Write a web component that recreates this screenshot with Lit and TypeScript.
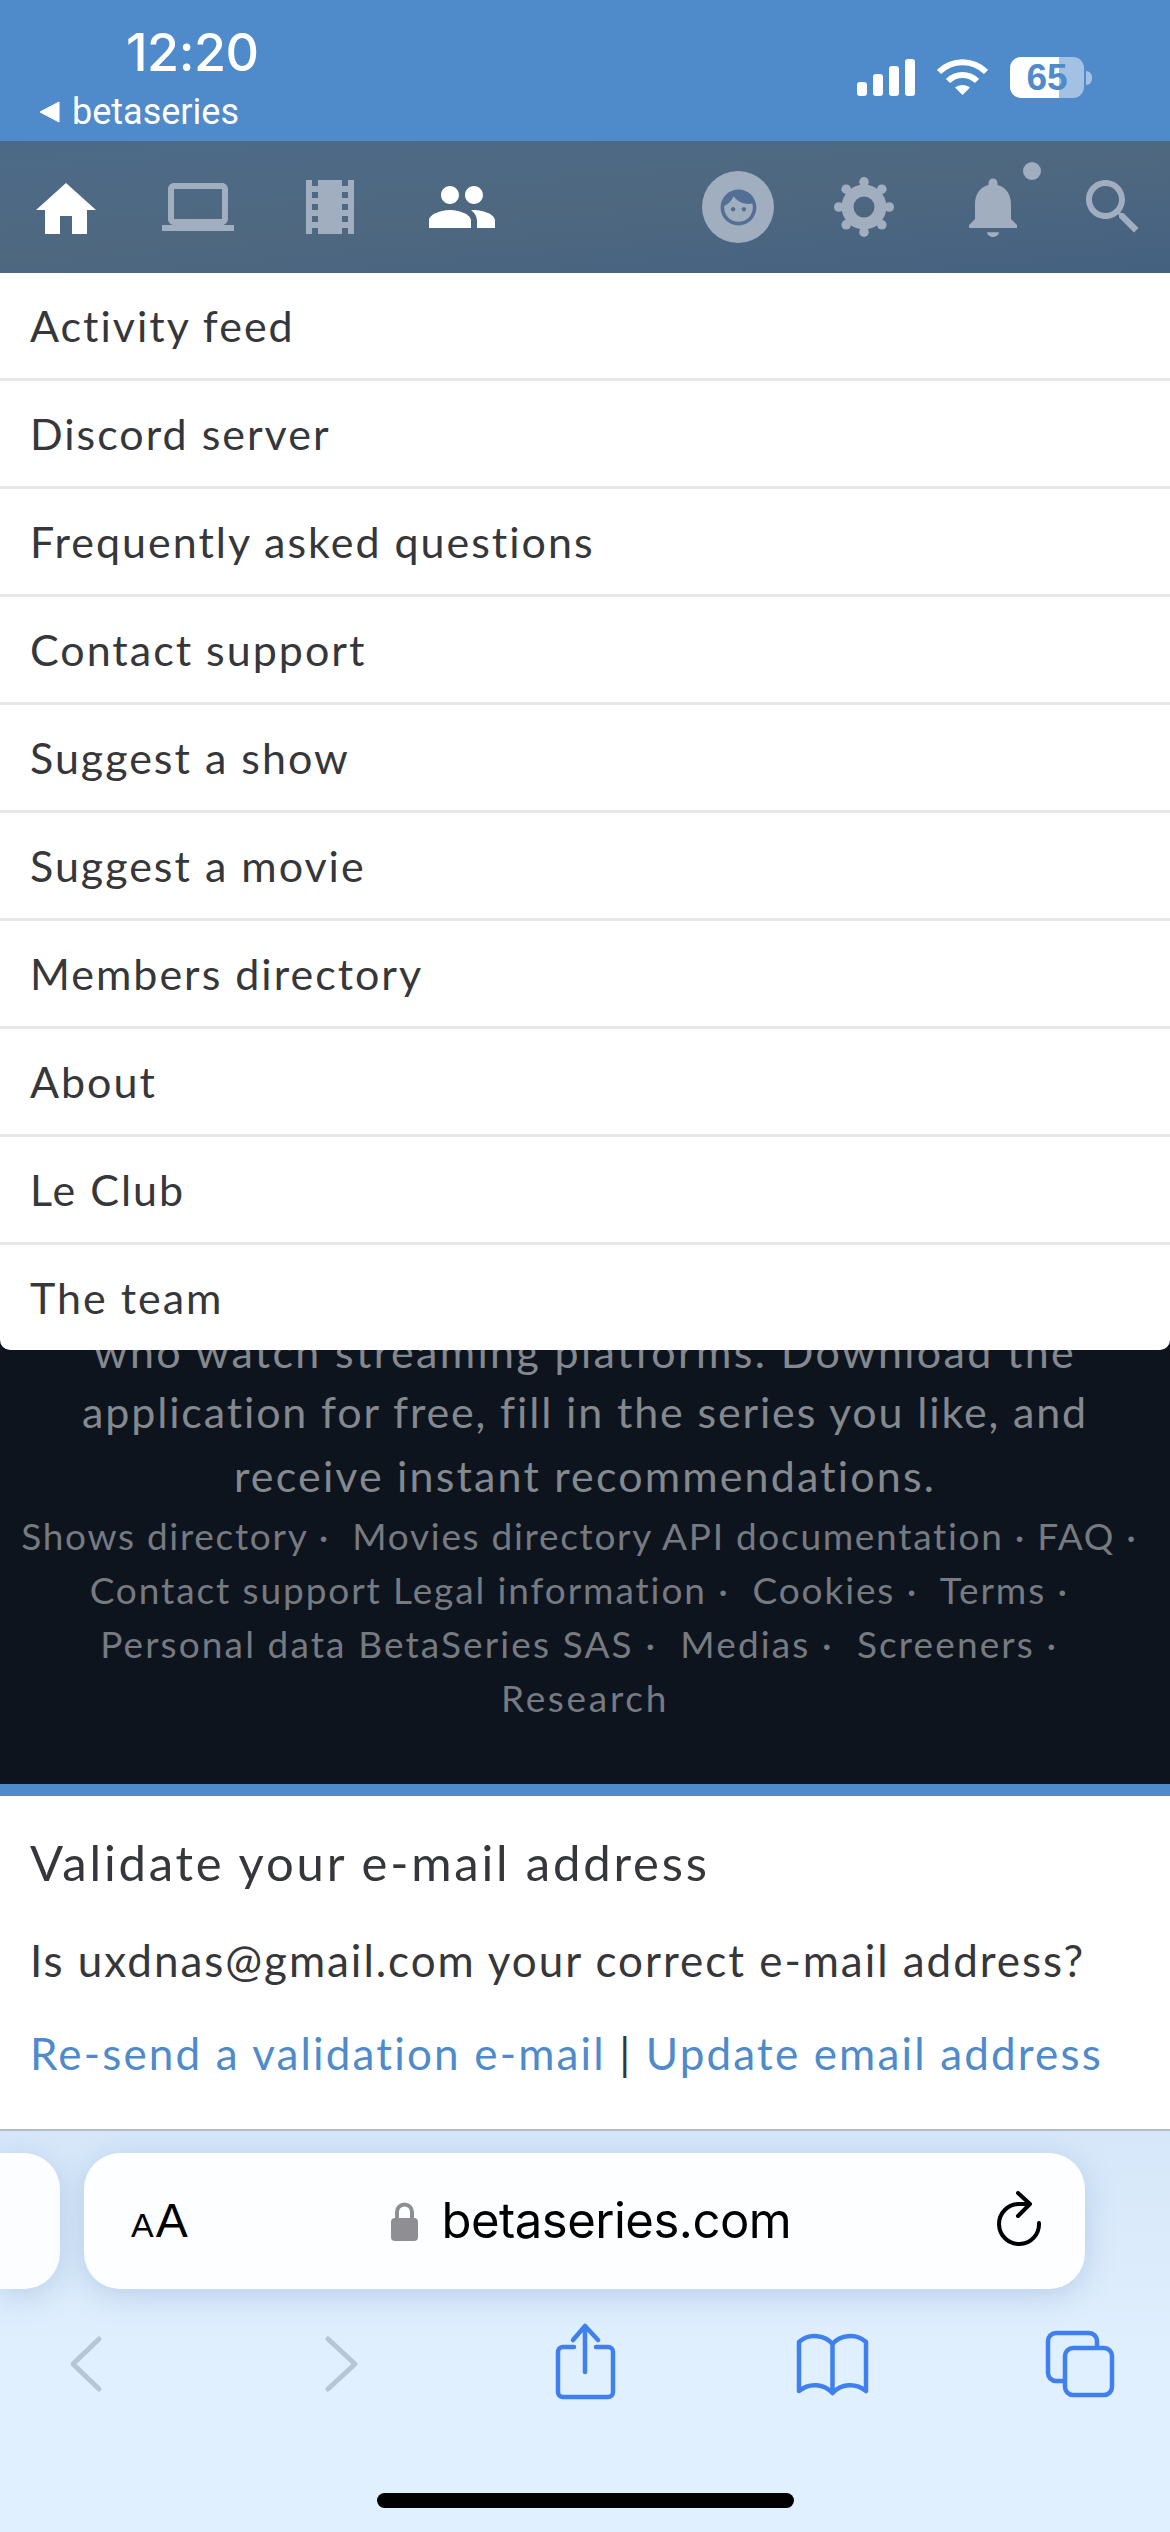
import { LitElement, html, css } from "lit";
import { customElement } from "lit/decorators.js";

const MENU = ["Activity feed","Discord server","Frequently asked questions","Contact support","Suggest a show","Suggest a movie","Members directory","About","Le Club","The team"];
const FOOT = [
  "Shows directory ·  Movies directory API documentation · FAQ · ",
  "Contact support Legal information ·  Cookies ·  Terms · ",
  "Personal data BetaSeries SAS ·  Medias ·  Screeners · ",
  "Research",
];

@customElement("app-root")
export class AppRoot extends LitElement {
  static styles = css`
    :host { display: block; width: 1170px; height: 2532px; overflow: hidden; font-family: "Lato", "Noto Sans", sans-serif; background: #fff; }
    .page { display: flex; flex-direction: column; height: 2532px; }
    .status { height: 141px; background: #4f8aca; color: #fff; display: flex; justify-content: space-between; flex: none; font-family: "Inter", sans-serif; }
    .status-left { display: flex; flex-direction: column; padding: 28px 0 0 39px; }
    .time { font-size: 52px; line-height: 50px; font-weight: 500; margin-left: 87px; letter-spacing: -0.5px; }
    .back { display: flex; align-items: center; gap: 12px; margin-top: 14px; font-size: 36px; line-height: 40px; font-family: "Roboto", sans-serif; }
    .status-right { display: flex; align-items: flex-start; padding: 57px 78px 0 0; gap: 22px; }
    .battery { display: flex; align-items: center; gap: 2px; }
    .cell { width: 74px; height: 41px; border-radius: 11px; background: linear-gradient(90deg, #fff 0 49px, rgba(255,255,255,.48) 49px); color: #4f8aca; font: bold 37px/41px "Liberation Sans", sans-serif; text-align: center; }
    .nub { width: 6px; height: 14px; border-radius: 0 6px 6px 0; background: rgba(255,255,255,.48); }
    .nav { height: 132px; flex: none; display: flex; justify-content: space-between; align-items: center; padding: 0 21px 0 30px; background: linear-gradient(175deg, #4c6a88 0%, #4f6880 50%, #446181 100%); }
    .nav svg { display: block; width: 72px; height: 72px; fill: #a0aebf; }
    .nav-left, .nav-right { display: flex; align-items: center; }
    .nav-left { gap: 60px; }
    .nav .on { fill: #fff; }
    .home { margin-top: 6px; }
    .avatar { width: 72px; height: 72px; border-radius: 50%; background: #a0aebf; display: flex; align-items: center; justify-content: center; margin-right: 54px; }
    .nav .avatar svg { width: 43px; height: 43px; fill: #536f95; }
    .bell { position: relative; margin: 0 48px 0 57px; }
    .dot { position: absolute; left: 66px; top: -9px; width: 18px; height: 18px; border-radius: 50%; background: #a0aebf; }
    .body { flex: 1; position: relative; min-height: 0; display: flex; flex-direction: column; }
    .dark { flex: 1; min-height: 0; background: #0e141d; display: flex; flex-direction: column; justify-content: flex-end; align-items: center; padding-bottom: 59px; overflow: hidden; white-space: pre; text-align: center; }
    .para { font-size: 43px; line-height: 63.5px; color: #84888f; letter-spacing: 1.85px; }
    .para.top { letter-spacing: 2.35px; margin-bottom: -3px; }
    .para.end { letter-spacing: 2.15px; }
    .links { font-size: 37px; line-height: 54px; color: #767a81; letter-spacing: 1.7px; }
    .links.l0 { margin-top: 2px; }
    .links.l1 { letter-spacing: 1.9px; }
    .links.l2 { letter-spacing: 2.12px; }
    .links.l3 { letter-spacing: 2.7px; }
    .menu { position: absolute; left: 0; right: 0; top: 0; background: #fff; border-radius: 0 0 10px 10px; }
    .row { height: 108px; box-sizing: border-box; padding-left: 30px; display: flex; align-items: center; font-size: 43px; letter-spacing: 2px; color: #36373a; border-bottom: 3px solid #e8e8e8; }
    .row:last-child { border-bottom: none; height: 105px; }
    .band { height: 12px; background: #4f8aca; flex: none; }
    .verify { height: 333px; flex: none; box-sizing: border-box; padding: 36px 30px 0; background: #fff; color: #36373a; }
    .verify h2 { margin: 0; font-size: 49px; line-height: 60px; font-weight: 400; letter-spacing: 2.8px; }
    .verify p { margin: 38px 0 0; font-size: 44px; line-height: 60px; letter-spacing: 1.96px; white-space: nowrap; }
    .verify p.actions { margin-top: 33px; letter-spacing: 2.16px; }
    .verify a { color: #4f8aca; }
    .bar { height: 403px; flex: none; box-sizing: border-box; border-top: 2px solid #b4bcc6; background: linear-gradient(180deg, #d6e7f9 0%, #dbebfb 30%, #e0f0ff 60%); padding-top: 22px; display: flex; flex-direction: column; }
    .urls { display: flex; gap: 24px; height: 136px; flex: none; }
    .tab-stub { width: 60px; border-radius: 0 36px 36px 0; background: #fbfdff; box-shadow: 0 6px 30px rgba(90,130,185,.28); }
    .url { width: 1001px; box-sizing: border-box; border-radius: 36px; background: #fcfeff; box-shadow: 0 6px 30px rgba(90,130,185,.28); display: flex; align-items: center; justify-content: space-between; padding: 0 40px 0 47px; font-family: "Inter", sans-serif; color: #000; }
    .aa { display: flex; align-items: baseline; gap: 2px; font-size: 48px; line-height: 56px; font-family: "Liberation Sans", sans-serif; margin-top: 4px; }
    .aa span { font-size: 34px; }
    .addr { display: flex; align-items: center; gap: 23px; font-size: 49px; line-height: 60px; letter-spacing: -0.5px; }
    .tools { display: flex; justify-content: space-between; padding: 0 40px 0 36px; margin-top: 21px; height: 100px; flex: none; }
    .tools svg { width: 100px; height: 100px; fill: none; stroke: #3f80ee; stroke-width: 4.5; stroke-linecap: round; stroke-linejoin: round; }
    .tools .off { stroke: #b8c6d3; stroke-width: 5; }
    .pill { align-self: center; width: 417px; height: 15px; border-radius: 8px; background: #000; margin-top: 83px; flex: none; }
  `;

  render() {
    return html`<div class="page">
      <div class="status">
        <div class="status-left">
          <div class="time">12:20</div>
          <div class="back"><svg width="21" height="22" viewBox="0 0 21 22"><path d="M1 11 20 1v20z" fill="#fff" stroke="#fff" stroke-linejoin="round"/></svg>betaseries</div>
        </div>
        <div class="status-right">
          <svg width="58" height="40" viewBox="0 0 58 40" fill="#fff"><rect x="0" y="25" width="10" height="14" rx="3"/><rect x="16" y="17" width="10" height="22" rx="3"/><rect x="32" y="9" width="10" height="30" rx="3"/><rect x="48" y="2" width="10" height="37" rx="3"/></svg>
          <svg width="51" height="40" viewBox="0 0 51 40" fill="none" stroke="#fff" stroke-width="6"><path d="M2 15C15 2 36 2 49 15"/><path d="M11 24C19 16 32 16 40 24"/><path d="M25.500 38 18 30.500C22 27 29 27 33 30.500Z" fill="#fff" stroke="none"/></svg>
          <div class="battery"><div class="cell">65</div><div class="nub"></div></div>
        </div>
      </div>
      <div class="nav">
        <div class="nav-left">
          <svg class="on home" viewBox="0 0 24 24"><path d="M10 20v-6h4v6h5v-8h3L12 3 2 12h3v8z"/></svg>
          <svg viewBox="0 0 24 24"><path d="M20 18c1.100 0 1.990-.9 1.990-2L22 6c0-1.100-.9-2-2-2H4c-1.100 0-2 .9-2 2v10c0 1.100.9 2 2 2H0v2h24v-2h-4zM4 6h16v10H4V6z"/></svg>
          <svg viewBox="0 0 24 24"><path d="M18 3v2h-2V3H8v2H6V3H4v18h2v-2h2v2h8v-2h2v2h2V3h-2zM8 17H6v-2h2v2zm0-4H6v-2h2v2zm0-4H6V7h2v2zm10 8h-2v-2h2v2zm0-4h-2v-2h2v2zm0-4h-2V7h2v2z"/></svg>
          <svg class="on" viewBox="0 0 24 24"><path d="M16 11c1.660 0 2.990-1.340 2.990-3S17.660 5 16 5c-1.660 0-3 1.340-3 3s1.340 3 3 3zm-8 0c1.660 0 2.990-1.340 2.990-3S9.660 5 8 5C6.340 5 5 6.340 5 8s1.340 3 3 3zm0 2c-2.330 0-7 1.170-7 3.500V19h14v-2.500c0-2.330-4.670-3.500-7-3.500zm8 0c-.29 0-.62.02-.97.05 1.160.84 1.970 1.970 1.970 3.450V19h6v-2.500c0-2.330-4.670-3.500-7-3.500z"/></svg>
        </div>
        <div class="nav-right">
          <div class="avatar"><svg viewBox="0 0 24 24"><path d="M9 11.750c-.69 0-1.250.56-1.250 1.250s.56 1.250 1.250 1.250 1.250-.56 1.250-1.250-.56-1.250-1.250-1.250zm6 0c-.69 0-1.250.56-1.250 1.250s.56 1.250 1.250 1.250 1.250-.56 1.250-1.250-.56-1.250-1.250-1.250zM12 2C6.480 2 2 6.480 2 12s4.480 10 10 10 10-4.480 10-10S17.520 2 12 2zm0 18c-4.410 0-8-3.590-8-8 0-.29.02-.58.05-.86 2.360-1.050 4.230-2.980 5.210-5.370C11.070 8.330 14.050 10 17.420 10c.78 0 1.530-.09 2.250-.26.22.74.33 1.530.33 2.260 0 4.410-3.590 8-8 8z"/></svg></div>
          <svg viewBox="0 0 24 24"><path fill-rule="evenodd" d="M12 4.500a7.500 7.500 0 1 0 0 15 7.500 7.500 0 0 0 0-15zm0 4a3.500 3.500 0 1 1 0 7 3.500 3.500 0 0 1 0-7z"/><circle cx="12" cy="3.600" r="1.600"/><circle cx="12" cy="20.400" r="1.600"/><circle cx="3.600" cy="12" r="1.600"/><circle cx="20.400" cy="12" r="1.600"/><circle cx="6.060" cy="6.060" r="1.600"/><circle cx="17.940" cy="6.060" r="1.600"/><circle cx="6.060" cy="17.940" r="1.600"/><circle cx="17.940" cy="17.940" r="1.600"/></svg>
          <div class="bell"><svg viewBox="0 0 24 24"><path d="M12 22c1.100 0 2-.9 2-1.600h-4c0 .7.89 1.600 2 1.600zm6-6v-5c0-3.070-1.640-5.640-4.500-6.320V4c0-.83-.67-1.500-1.500-1.500s-1.500.67-1.500 1.500v.68C7.630 5.360 6 7.920 6 11v5l-2 2v1h16v-1l-2-2z"/></svg><span class="dot"></span></div>
          <svg viewBox="0 0 24 24"><path d="M15.500 14h-.79l-.28-.27C15.410 12.590 16 11.110 16 9.500 16 5.910 13.090 3 9.500 3S3 5.910 3 9.500 5.910 16 9.500 16c1.610 0 3.090-.59 4.230-1.570l.27.28v.79l5 4.990L20.490 19l-4.990-5zm-6 0C7.010 14 5 11.990 5 9.500S7.010 5 9.500 5 14 7.010 14 9.500 11.990 14 9.500 14z"/></svg>
        </div>
      </div>
      <div class="body">
        <div class="dark">
          <div class="para top">who watch streaming platforms. Download the</div>
          <div class="para">application for free, fill in the series you like, and</div>
          <div class="para end">receive instant recommendations.</div>
          ${FOOT.map((l, i) => html`<div class="links l${i}">${l}</div>`)}
        </div>
        <div class="menu">${MENU.map((m) => html`<div class="row">${m}</div>`)}</div>
      </div>
      <div class="band"></div>
      <div class="verify">
        <h2>Validate your e-mail address</h2>
        <p>Is uxdnas@gmail.com your correct e-mail address?</p>
        <p class="actions"><a>Re-send a validation e-mail</a> | <a>Update email address</a></p>
      </div>
      <div class="bar">
        <div class="urls">
          <div class="tab-stub"></div>
          <div class="url">
            <div class="aa"><span>A</span>A</div>
            <div class="addr">
              <svg width="27" height="40" viewBox="0 0 27 40" fill="#8e8e93"><path d="M6 18v-7a7.500 7.500 0 0 1 15 0v7" fill="none" stroke="#8e8e93" stroke-width="4"/><rect y="17" width="27" height="23" rx="4"/></svg>
              betaseries.com
            </div>
            <svg width="50" height="60" viewBox="0 0 50 60" fill="none" stroke="#000" stroke-width="4" stroke-linecap="round" stroke-linejoin="round"><path d="M44 32A20 20 0 1 1 24 13h8"/><path d="M23 2 35 13 23 25"/></svg>
          </div>
        </div>
        <div class="tools">
          <svg class="off" viewBox="0 0 100 100"><path d="M63 29 37 54 63 79"/></svg>
          <svg class="off" viewBox="0 0 100 100"><path d="M43 29 70 54 43 79"/></svg>
          <svg viewBox="0 0 100 100"><path d="M41 37H30a5 5 0 0 0-5 5V82a5 5 0 0 0 5 5H75a5 5 0 0 0 5-5V42a5 5 0 0 0-5-5H63"/><path d="M52 62V16M40 30 52 16 65 30"/></svg>
          <svg viewBox="0 0 100 100"><path d="M50.500 34C44 26 28 22 17 32V81C28 72 42 74 50.500 83 59 74 73 72 84 81V32C73 22 57 26 50.500 34V83"/></svg>
          <svg viewBox="0 0 100 100"><path d="M67 37V31a8 8 0 0 0-8-8H26a8 8 0 0 0-8 8V63a8 8 0 0 0 8 8h8"/><rect x="35" y="38" width="47" height="47" rx="8"/></svg>
        </div>
        <div class="pill"></div>
      </div>
    </div>`;
  }
}
